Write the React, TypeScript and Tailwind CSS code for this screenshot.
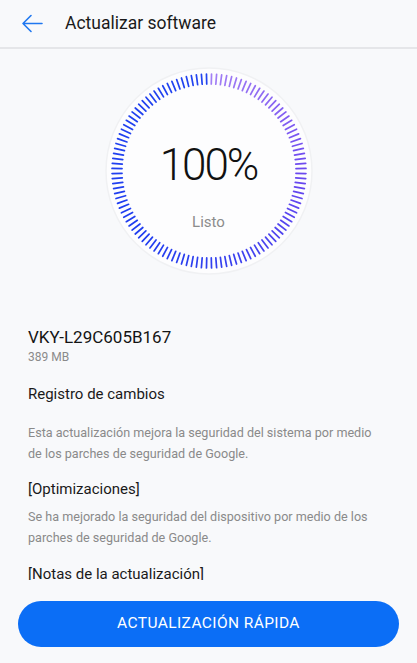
import { useMemo } from "react";

const hex = (n: number) => Math.round(n).toString(16).padStart(2, "0");

// colour stops along the sweep, degrees clockwise from 12 o'clock
const stops: [number, number[]][] = [
  [0, [0xa4, 0x80, 0xf5]],
  [90, [0x6c, 0x48, 0xef]],
  [180, [0x30, 0x40, 0xef]],
  [230, [0x1f, 0x3d, 0xf0]],
  [360, [0x22, 0x44, 0xf0]],
];

const tickColor = (deg: number) => {
  let k = 0;
  while (k < stops.length - 2 && deg > stops[k + 1][0]) k++;
  const [d0, c0] = stops[k];
  const [d1, c1] = stops[k + 1];
  const t = Math.min(Math.max((deg - d0) / (d1 - d0), 0), 1);
  const c = c0.map((f, i) => f + (c1[i] - f) * t);
  return `#${hex(c[0])}${hex(c[1])}${hex(c[2])}`;
};

const ProgressRing = () => {
  const ticks = useMemo(
    () =>
      Array.from({ length: 120 }, (_, i) => {
        const deg = i * 3 + 1.5;
        const a = ((deg - 90) * Math.PI) / 180;
        return {
          x1: 106 + 87 * Math.cos(a),
          y1: 106 + 87 * Math.sin(a),
          x2: 106 + 97 * Math.cos(a),
          y2: 106 + 97 * Math.sin(a),
          color: tickColor(deg),
        };
      }),
    []
  );

  return (
    <div className="relative w-[212px] h-[212px]">
      <svg width="212" height="212" viewBox="0 0 212 212">
        <circle cx="106" cy="106" r="103" fill="#fdfdfe" stroke="#f0f1f3" strokeWidth="1.5" />
        {ticks.map((t, i) => (
          <line
            key={i}
            x1={t.x1}
            y1={t.y1}
            x2={t.x2}
            y2={t.y2}
            stroke={t.color}
            strokeWidth="1.7"
            strokeLinecap="round"
          />
        ))}
      </svg>
      <div className="absolute inset-0 flex flex-col items-center">
        <div className="mt-[76px] text-[44px] leading-[48px] font-light tracking-[-2px] text-[#111]">
          100%
        </div>
        <div className="mt-[23px] text-[15px] leading-[20px] text-[#8c8c8c]">Listo</div>
      </div>
    </div>
  );
};

const App = () => {
  return (
    <div
      className="w-full h-[663px] bg-[#f8f9fb] flex flex-col overflow-hidden"
      style={{ fontFamily: "Roboto, 'Noto Sans', 'Liberation Sans', sans-serif" }}
    >
      <header className="h-[49px] shrink-0 flex items-center border-b-2 border-[#e5e6e9]">
        <svg className="ml-[21px]" width="22" height="19" viewBox="0 0 22 19" fill="none">
          <path
            d="M21 9.5H2M10 1.5L2 9.5L10 17.5"
            stroke="#1f77f0"
            strokeWidth="1.6"
            strokeLinecap="round"
            strokeLinejoin="round"
          />
        </svg>
        <h1 className="ml-[22px] text-[17.5px] text-[#1a1a1a]">Actualizar software</h1>
      </header>

      <main className="h-[531px] shrink-0 overflow-hidden">
        <div className="flex justify-center pt-[16px]">
          <ProgressRing />
        </div>

        <section className="pl-7 pr-[34px]">
          <div className="mt-[49px] text-[17px] leading-[22px] text-[#141414]">VKY-L29C605B167</div>
          <div className="mt-[1px] text-[12px] leading-[16px] text-[#8a8a8a]">389 MB</div>

          <div className="mt-[19px] text-[15px] leading-[20px] text-[#1a1a1a]">Registro de cambios</div>
          <p className="mt-[18px] text-[12.6px] leading-[21px] text-[#8a8a8a]">
            Esta actualización mejora la seguridad del sistema por medio de los parches de seguridad de Google.
          </p>

          <div className="mt-[15px] text-[15px] leading-[20px] text-[#1a1a1a]">[Optimizaciones]</div>
          <p className="mt-[7px] text-[12.6px] leading-[21px] text-[#8a8a8a]">
            Se ha mejorado la seguridad del dispositivo por medio de los parches de seguridad de Google.
          </p>

          <div className="mt-[16px] text-[15px] leading-[20px] text-[#1a1a1a]">[Notas de la actualización]</div>
        </section>
      </main>

      <div className="px-[18px] pt-[21px]">
        <button className="w-full h-[46px] rounded-full bg-[#0b6ef6] text-white text-[15.5px] tracking-[0.4px]">
          ACTUALIZACIÓN RÁPIDA
        </button>
      </div>
    </div>
  );
};

export default App;
